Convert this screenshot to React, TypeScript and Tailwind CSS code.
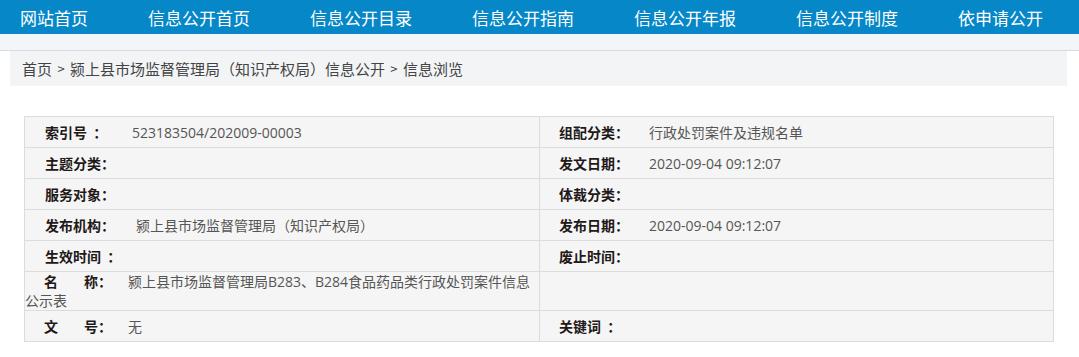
import React from "react";

const navItems = ["网站首页", "信息公开首页", "信息公开目录", "信息公开指南", "信息公开年报", "信息公开制度", "依申请公开"];

function Label({ children, className = "" }: { children: React.ReactNode; className?: string }) {
  return <span className={`font-bold text-[#221818] font-['Noto_Sans_CJK_SC',sans-serif] ${className}`}>{children}</span>;
}

function Row({ left, right, h = "h-[31px]" }: { left: React.ReactNode; right: React.ReactNode; h?: string }) {
  return (
    <div className={`flex ${h} border-b border-[#dcdcdc]`}>
      <div className="w-[515px] flex items-center border-r border-[#dcdcdc]">{left}</div>
      <div className="flex-1 flex items-center pl-[19px]">{right}</div>
    </div>
  );
}

export default function App() {
  return (
    <div className="w-[1079px] h-[357px] bg-white font-['Open_Sans','Noto_Sans_CJK_SC',sans-serif] overflow-hidden">
      <div className="h-[34px] bg-[#0587c8] flex items-center pl-[20px] gap-[60px] text-white text-[17px] leading-none font-['Noto_Sans_CJK_SC',sans-serif]">
        {navItems.map((n) => (
          <span key={n}>{n}</span>
        ))}
      </div>
      <div className="h-[17px] bg-[#f3f6f9] border-b border-[#d8dce1]" />
      <div className="ml-[10px] w-[1057px] h-[35px] bg-[#f3f4f6] flex items-center pl-[12px] text-[15px] text-[#444] leading-none font-['Noto_Sans_CJK_SC',sans-serif]">
        首页&nbsp;<span className="text-[13px] mx-[2px]">&gt;</span>&nbsp;颍上县市场监督管理局（知识产权局）信息公开&nbsp;<span className="text-[13px] mx-[2px]">&gt;</span>&nbsp;信息浏览
      </div>
      <div className="mt-[30px] ml-[24px] w-[1030px] border border-[#dcdcdc] bg-[#f5f5f5] text-[14px] leading-[19px] text-[#555]">
        <Row
          left={
            <>
              <Label className="ml-[20px] w-[87px] inline-block">索引号 &nbsp;：</Label>
              <span>523183504/202009-00003</span>
            </>
          }
          right={
            <>
              <Label className="w-[90px] inline-block">组配分类：</Label>
              <span className="font-['Noto_Sans_CJK_SC',sans-serif]">行政处罚案件及违规名单</span>
            </>
          }
        />
        <Row
          left={<Label className="ml-[20px]">主题分类：</Label>}
          right={
            <>
              <Label className="w-[90px] inline-block">发文日期：</Label>
              <span>2020-09-04 09:12:07</span>
            </>
          }
        />
        <Row
          left={<Label className="ml-[20px]">服务对象：</Label>}
          right={<Label>体裁分类：</Label>}
        />
        <Row
          left={
            <>
              <Label className="ml-[20px] w-[91px] inline-block">发布机构：</Label>
              <span className="font-['Noto_Sans_CJK_SC',sans-serif]">颍上县市场监督管理局（知识产权局）</span>
            </>
          }
          right={
            <>
              <Label className="w-[90px] inline-block">发布日期：</Label>
              <span>2020-09-04 09:12:07</span>
            </>
          }
        />
        <Row
          left={<Label className="ml-[20px]">生效时间 &nbsp;：</Label>}
          right={<Label>废止时间：</Label>}
        />
        <div className="flex h-[39px] border-b border-[#dcdcdc]">
          <div className="w-[515px] flex flex-col justify-center border-r border-[#dcdcdc]">
            <div className="whitespace-nowrap">
              <Label className="ml-[19px] w-[84px] inline-block">
                名<span className="inline-block w-[26px]" />称：
              </Label>
              <span>颍上县市场监督管理局B283、B284食品药品类行政处罚案件信息</span>
            </div>
            <div>公示表</div>
          </div>
          <div className="flex-1" />
        </div>
        <div className="flex h-[30px]">
          <div className="w-[515px] flex items-center border-r border-[#dcdcdc]">
            <Label className="ml-[19px] w-[84px] inline-block">
              文<span className="inline-block w-[26px]" />号：
            </Label>
            <span>无</span>
          </div>
          <div className="flex-1 flex items-center pl-[19px]">
            <Label>关键词 &nbsp;：</Label>
          </div>
        </div>
      </div>
    </div>
  );
}
